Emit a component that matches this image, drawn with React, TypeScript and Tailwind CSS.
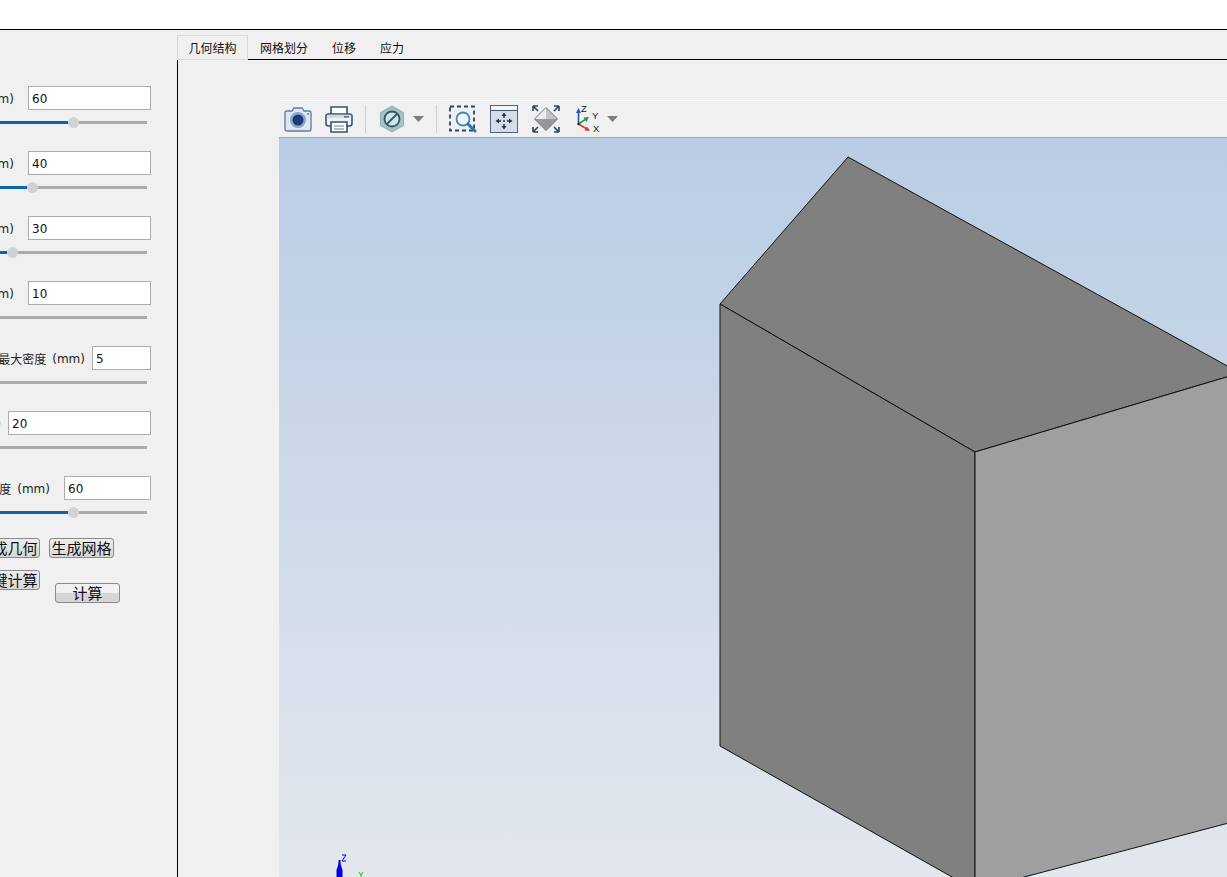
const FONT = "font-['DejaVu_Sans','Noto_Sans_CJK_SC',sans-serif]";
const CJK = "font-['Noto_Sans_CJK_SC',sans-serif]";

function Row({ label, value, w, fill, gap }: { label: string; value: string; w: number; fill: number | null; gap: number }) {
  return (
    <div className="h-[65px] flex flex-col">
      <div className="flex justify-end items-center h-[24px] pr-[26px] whitespace-nowrap">
        <span className={`${CJK} text-[12px] text-[#222] leading-none mt-[1px]`}>{label}</span>
        <span className={`${FONT} text-[12px] text-[#222] leading-none ml-[6px] mt-[1px]`}>(mm)</span>
        <div
          className={`${FONT} h-[24px] shrink-0 bg-white border border-[#acacac] pl-[3px] text-[12px] leading-[25px] text-[#111]`}
          style={{ width: w, marginLeft: gap }}
        >
          {value}
        </div>
      </div>
      <div className="relative mt-[11px] w-[147px] h-[3px] bg-[#ababab]">
        {fill !== null && (
          <>
            <div className="absolute left-0 top-0 h-[3px] bg-[#0a64b0]" style={{ width: fill }} />
            <div
              className="absolute top-[-4px] w-[11px] h-[11px] rounded-full bg-[#d2d2d2]"
              style={{ left: fill }}
            />
          </>
        )}
      </div>
    </div>
  );
}

function Btn({ children }: { children: string }) {
  return (
    <div
      className={`${CJK} h-[20px] w-[65px] shrink-0 border border-[#8a8a8a] rounded-[3px] bg-[linear-gradient(#ededed_0%,#e2e2e2_50%,#d6d6d6_100%)] text-[15px] leading-[18px] text-center text-[#111] whitespace-nowrap overflow-hidden`}
    >
      {children}
    </div>
  );
}

function Camera() {
  return (
    <svg width="30" height="28" viewBox="0 0 30 28">
      <path d="M2 8 Q2 6 4 6 H9 L11 3 H19 L21 6 H26 Q28 6 28 8 V24 Q28 26 26 26 H4 Q2 26 2 24 Z" fill="#dfe7f1" stroke="#5d7ca8" strokeWidth="1.3" />
      <circle cx="15" cy="15" r="8" fill="#8ba6cb" />
      <circle cx="15" cy="15" r="5.5" fill="#1c3a78" />
      <circle cx="25" cy="9" r="1" fill="#5d7ca8" />
    </svg>
  );
}

function Printer() {
  return (
    <svg width="30" height="30" viewBox="0 0 30 30">
      <path d="M7 11 V3 H23 V11" fill="#fff" stroke="#36506f" strokeWidth="1.6" />
      <rect x="2" y="10" width="26" height="12" rx="2.5" fill="#eef2f6" stroke="#36506f" strokeWidth="1.6" />
      <rect x="2.8" y="10.8" width="24.4" height="3" fill="#cfd9e6" />
      <path d="M7 18 H23 V28 H7 Z" fill="#fff" stroke="#36506f" strokeWidth="1.6" />
      <path d="M10 22 H20 M10 25 H20" stroke="#9aa9b9" strokeWidth="1.4" />
      <rect x="20" y="12" width="5" height="1.6" fill="#5f7690" />
    </svg>
  );
}

function Hex() {
  return (
    <svg width="26" height="28" viewBox="0 0 26 28">
      <path d="M13 1 L24.5 7.5 V20.5 L13 27 L1.5 20.5 V7.5 Z" fill="#a6c0c9" stroke="#8fabb6" strokeWidth="1" />
      <circle cx="13" cy="14" r="7.5" fill="#d4e1e6" stroke="#2f5a68" strokeWidth="1.8" />
      <path d="M8 19 L18 9" stroke="#2f5a68" strokeWidth="1.8" />
    </svg>
  );
}

function Caret() {
  return (
    <svg width="11" height="6" viewBox="0 0 11 6">
      <path d="M0 0 H11 L5.500 6 Z" fill="#7d7d7d" />
    </svg>
  );
}

function ZoomBox() {
  return (
    <svg width="28" height="28" viewBox="0 0 28 28">
      <rect x="1" y="1.500" width="24" height="24" fill="none" stroke="#24456f" strokeWidth="1.800" strokeDasharray="4 3" />
      <circle cx="14" cy="14" r="6.500" fill="#eef4f9" stroke="#3f86bd" strokeWidth="1.800" />
      <path d="M19 19 L26 26" stroke="#2d76b2" strokeWidth="3" strokeLinecap="round" />
    </svg>
  );
}

function ZoomExtents() {
  return (
    <svg width="28" height="28" viewBox="0 0 28 28">
      <rect x="0.500" y="0.500" width="27" height="27" fill="#d5dce6" stroke="#4f6480" />
      <rect x="1" y="1" width="26" height="4" fill="#f3f5f8" />
      <path d="M1 5.500 H27" stroke="#3f5674" />
      <path d="M14 9 V13 M14 19 V23 M7 16 H11 M17 16 H21" stroke="#1d3557" strokeWidth="1.400" />
      <path d="M14 7.500 L11.500 11 H16.500 Z M14 24.500 L11.500 21 H16.500 Z M5.500 16 L9 13.500 V18.500 Z M22.500 16 L19 13.500 V18.500 Z" fill="#1d3557" />
      <circle cx="14" cy="16" r="1" fill="#1d3557" />
    </svg>
  );
}

function Diamond() {
  return (
    <svg width="28" height="28" viewBox="0 0 28 28">
      <path d="M14 2.500 L25.500 14 H2.500 Z" fill="#ededed" />
      <path d="M14 2.500 L25.500 14 H14 Z" fill="#c4c4c4" />
      <path d="M2.500 14 H25.500 L14 25.500 Z" fill="#979797" />
      <path d="M14 2.500 L25.500 14 L14 25.500 L2.500 14 Z" fill="none" stroke="#6b7686" />
      <path d="M1 1 H6 M1 1 V6 M1 1 L6 6 M27 1 H22 M27 1 V6 M27 1 L22 6 M1 27 H6 M1 27 V22 M1 27 L6 22 M27 27 H22 M27 27 V22 M27 27 L22 22" stroke="#27476f" strokeWidth="1.600" fill="none" />
    </svg>
  );
}

function Axes() {
  return (
    <svg width="26" height="30" viewBox="0 0 26 30">
      <path d="M3.500 20 V7" stroke="#2a55b0" strokeWidth="1.600" />
      <path d="M3.500 4 L1 9 H6 Z" fill="#2a55b0" />
      <path d="M3.500 20 L11 15" stroke="#1f9a4a" strokeWidth="1.600" />
      <path d="M14 13 L8.500 13.500 L11.500 18 Z" fill="#1f9a4a" />
      <path d="M3.500 20 L12 25" stroke="#e0352f" strokeWidth="1.600" />
      <path d="M15 27 L9.500 26.500 L12 22.500 Z" fill="#e0352f" />
      <circle cx="3.500" cy="20" r="1.200" fill="#222" />
      <text x="6" y="7.500" fontSize="9.500" fontFamily="'Liberation Sans',sans-serif" fill="#222">Z</text>
      <text x="17" y="14.500" fontSize="9.500" fontFamily="'Liberation Sans',sans-serif" fill="#222">Y</text>
      <text x="18" y="27.500" fontSize="9.500" fontFamily="'Liberation Sans',sans-serif" fill="#222">X</text>
    </svg>
  );
}

function Sep() {
  return <div className="w-px h-[28px] bg-[#d0d0d0]" />;
}

export default function App() {
  const rows = [
    { label: "长度", value: "60", w: 123, fill: 68, gap: 14 },
    { label: "宽度", value: "40", w: 123, fill: 27, gap: 14 },
    { label: "高度", value: "30", w: 123, fill: 7, gap: 14 },
    { label: "厚度", value: "10", w: 123, fill: null, gap: 14 },
    { label: "网格最大密度", value: "5", w: 59, fill: null, gap: 7 },
    { label: "步长", value: "20", w: 143, fill: null, gap: 7 },
    { label: "网格长度", value: "60", w: 87, fill: 68, gap: 14 },
  ];
  return (
    <div className="w-[1227px] h-[877px] overflow-hidden bg-[#f0f0f0] flex flex-col">
      <div className="h-[30px] shrink-0 bg-white border-b border-black" />
      <div className="flex-1 flex min-h-0">
        <div className="w-[177px] shrink-0 overflow-hidden pt-[56px]">
          {rows.map((r, i) => (
            <Row key={i} {...r} />
          ))}
          <div className="flex justify-end gap-[9px] pr-[63px] mt-[-3px]">
            <Btn>生成几何</Btn>
            <Btn>生成网格</Btn>
          </div>
          <div className="flex justify-start items-start mt-[12px] ml-[-25px] gap-[15px]">
            <Btn>一键计算</Btn>
            <div className="mt-[13px]">
              <div className={`${CJK} w-[65px] h-[20px] border border-[#8a8a8a] rounded-[3px] bg-[linear-gradient(#f0f0f0_0%,#f0f0f0_50%,#d6d6d6_50%,#d6d6d6_100%)] text-[15px] leading-[18px] text-center text-[#111]`}>
                计算
              </div>
            </div>
          </div>
        </div>
        <div className="flex-1 flex flex-col min-w-0">
          <div className={`${CJK} h-[30px] shrink-0 flex items-end text-[12px] text-[#111]`}>
            <div className="h-[25px] w-[71px] shrink-0 border border-[#d9d9d9] bg-[#f0f0f0] text-center leading-[24px]">
              几何结构
            </div>
            <div className="flex-1 h-[25px] flex border-b border-black pl-[12px] gap-[24px] leading-[25px]">
              <span>网格划分</span>
              <span>位移</span>
              <span>应力</span>
            </div>
          </div>
          <div className="flex-1 min-h-0 border-l border-black pl-[101px] pt-[40px]">
            <div className="h-full flex flex-col border-t border-white">
              <div className="h-[37px] shrink-0 flex items-center border-b border-[#a9a9a9] pl-[4px] bg-[#f0f0f0]">
                <Camera />
                <div className="w-[11px]" />
                <Printer />
                <div className="w-[11px]" />
                <Sep />
                <div className="w-[13px]" />
                <Hex />
                <div className="w-[8px]" />
                <Caret />
                <div className="w-[12px]" />
                <Sep />
                <div className="w-[12px]" />
                <ZoomBox />
                <div className="w-[13px]" />
                <ZoomExtents />
                <div className="w-[14px]" />
                <Diamond />
                <div className="w-[15px]" />
                <Axes />
                <div className="w-[6px]" />
                <Caret />
              </div>
              <div className="flex-1 min-h-0 relative overflow-hidden bg-[linear-gradient(#b9cde4,#e3e7ee)]">
                <svg width="948" height="739" viewBox="279 138 948 739" className="absolute left-0 top-0">
                  <polygon points="848,157 720,304 975,452 1240,373" fill="#808080" stroke="#111" strokeWidth="1" />
                  <polygon points="720,304 975,452 975,890 720,746" fill="#808080" stroke="#111" strokeWidth="1" />
                  <polygon points="975,452 1240,373 1240,820 975,890" fill="#9f9f9f" stroke="#111" strokeWidth="1" />
                  <path d="M339.500 860 V877" stroke="#0000e0" strokeWidth="2" />
                  <path d="M336.500 877 V870 L339.500 861 L342.500 870 V877 Z" fill="#0000e0" />
                  <path d="M342 855 H346 L342 861 H346" fill="none" stroke="#0000e0" strokeWidth="1" />
                  <path d="M359 872 L361 875 L363 872 M361 875 V877" fill="none" stroke="#00d000" strokeWidth="1" />
                </svg>
              </div>
            </div>
          </div>
        </div>
      </div>
    </div>
  );
}
